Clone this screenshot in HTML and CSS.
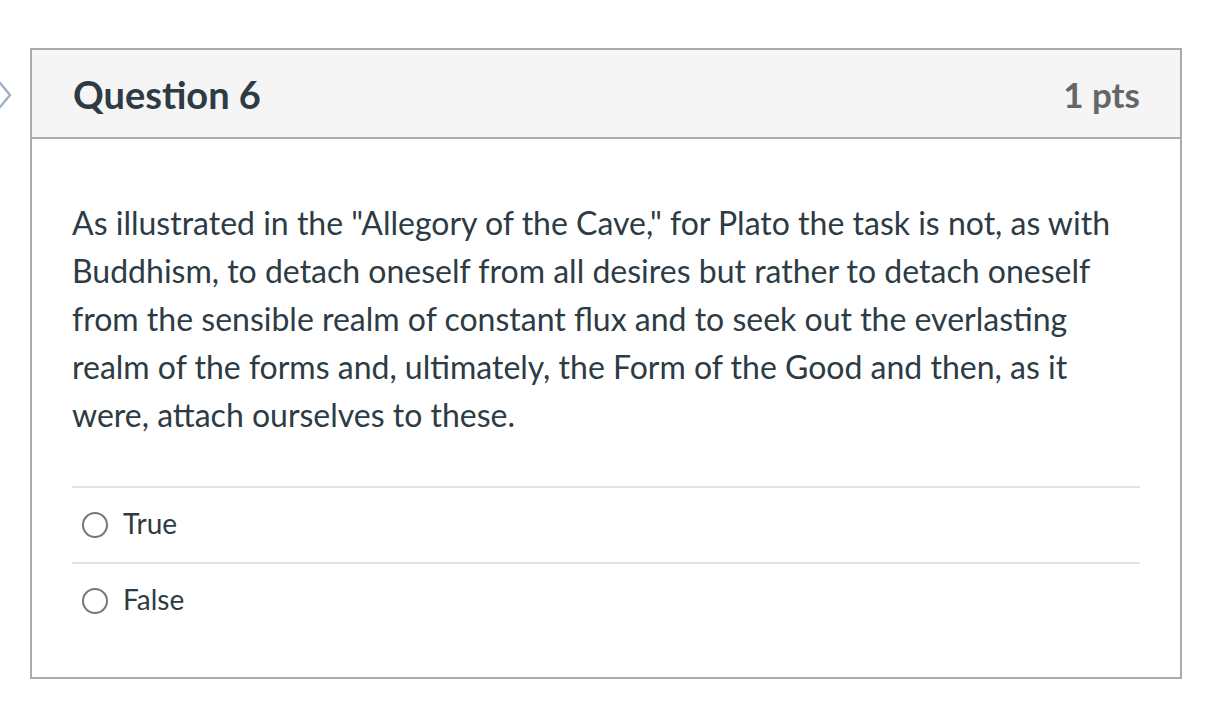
FILE: index.html
```html
<!DOCTYPE html>
<html>
<head>
<meta charset="utf-8">
<link rel="stylesheet" href="styles.css">
</head>
<body>
<div class="page">
  <div class="nav">
    <svg class="chev" width="14" height="30" viewBox="0 0 14 30"><path d="M1 3 L11 15 L1 27" fill="none" stroke="#9cb0c2" stroke-width="2.4" stroke-linejoin="round" stroke-linecap="round"/></svg>
  </div>
  <div class="question">
    <div class="qhead">
      <h2 class="qtitle">Question 6</h2>
      <div class="qpts">1 pts</div>
    </div>
    <div class="qbody">
      <p class="qtext">As illustrated in the "Allegory of the Cave," for Plato the task is not, as with Buddhism, to detach oneself from all desires but rather to detach oneself from the sensible realm of constant flux and to seek out the everlasting realm of the forms and, ultimately, the Form of the Good and then, as it were, attach ourselves to these.</p>
      <div class="answers">
        <label class="answer"><span class="radio"></span><span class="alabel">True</span></label>
        <label class="answer"><span class="radio"></span><span class="alabel">False</span></label>
      </div>
    </div>
  </div>
</div>
</body>
</html>
```
FILE: styles.css
```css
html, body {
  margin: 0;
  padding: 0;
  background: #ffffff;
}
body {
  font-family: Lato, "Open Sans", sans-serif;
  color: #2d3b45;
}
.page {
  display: flex;
  align-items: flex-start;
  padding-top: 48px;
}
.nav {
  width: 30px;
  flex: 0 0 30px;
  padding-top: 32px;
}
.chev {
  display: block;
  margin-left: -1px;
}
.question {
  width: 1148px;
  border: 2px solid #ababab;
}
.qhead {
  display: flex;
  justify-content: space-between;
  align-items: center;
  height: 87px;
  padding: 0 40px;
  background: #f5f5f5;
  border-bottom: 2px solid #ababab;
}
.qtitle {
  margin: 0;
  font-size: 38px;
  font-weight: 700;
  color: #2d3b45;
  padding-left: 1px;
}
.qpts {
  font-size: 35px;
  font-weight: 700;
  color: #666666;
}
.qbody {
  padding: 60px 40px 39px;
}
.qtext {
  margin: 0;
  font-size: 32px;
  line-height: 48px;
}
.answers {
  margin-top: 47px;
}
.answer {
  display: flex;
  align-items: center;
  height: 74px;
  border-top: 2px solid #e2e2e2;
  padding-left: 10px;
}
.radio {
  width: 22px;
  height: 22px;
  border: 2px solid #777777;
  border-radius: 50%;
  flex: 0 0 auto;
}
.alabel {
  margin-left: 15px;
  padding-bottom: 5px;
  font-size: 28px;
  color: #2d3b45;
}
```
